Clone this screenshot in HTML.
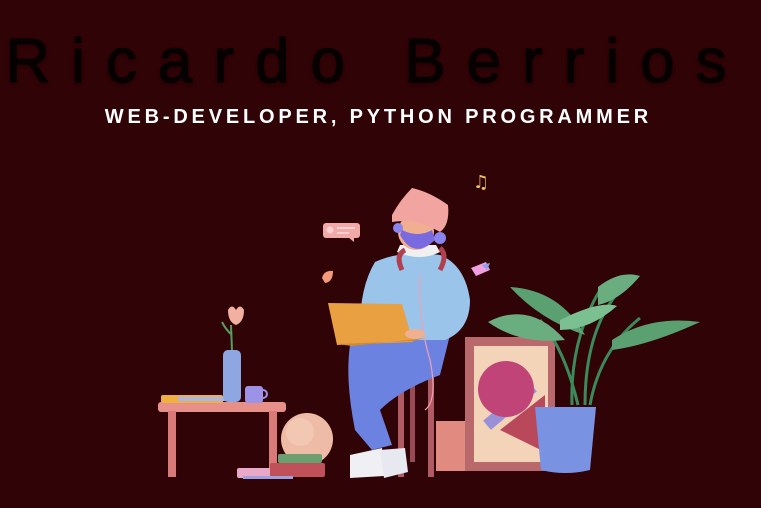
<!DOCTYPE html>
<html><head><meta charset="utf-8"><style>
html,body{margin:0;padding:0;}
body{width:761px;height:508px;background:#300306;overflow:hidden;position:relative;font-family:"Liberation Sans",sans-serif;}
h1{position:absolute;left:-4px;top:26px;width:761px;margin:0;text-align:center;font-size:62px;font-weight:400;letter-spacing:21px;color:#060000;text-indent:0;white-space:nowrap;-webkit-text-stroke:1.2px #060000;text-shadow:0 2px 3px rgba(0,0,0,.4);}
h2{position:absolute;left:-4px;top:106px;width:761px;margin:0;text-align:center;font-size:20px;font-weight:700;letter-spacing:3.8px;text-indent:3.8px;color:#fff;white-space:nowrap;}
svg{position:absolute;left:0;top:0;}
</style></head><body>
<h1>Ricardo Berrios</h1>
<h2>WEB-DEVELOPER, PYTHON PROGRAMMER</h2>
<svg width="761" height="508" viewBox="0 0 761 508">
<rect x="158" y="402" width="128" height="10" rx="3" fill="#e7908a"/>
<rect x="168" y="411" width="8" height="66" fill="#d97a78"/>
<rect x="269" y="411" width="8" height="66" fill="#d97a78"/>
<rect x="161" y="395" width="62" height="8" rx="2" fill="#f0b040"/>
<rect x="178" y="397" width="50" height="4" fill="#a9b6e8"/>
<path d="M232 351 L231 325 M232 335 Q226 330 222 322" stroke="#5a9a60" stroke-width="2" fill="none"/>
<path d="M228 310 Q232 303 236 310 Q240 303 244 310 Q244 322 236 325 Q228 322 228 310Z" fill="#f2b0a0"/>
<rect x="223" y="350" width="18" height="52" rx="5" fill="#8ea6e2"/>
<rect x="245" y="386" width="18" height="17" rx="3" fill="#9c92e8"/>
<path d="M263 390 a4 4 0 0 1 0 8" stroke="#9c92e8" stroke-width="2" fill="none"/>
<circle cx="307" cy="439" r="26" fill="#eebca6"/>
<circle cx="300" cy="432" r="14" fill="#f5d0bc" opacity=".6"/>
<rect x="237" y="468" width="55" height="10" rx="2" fill="#e8a8c8"/>
<rect x="270" y="463" width="55" height="14" rx="2" fill="#c0505a"/>
<rect x="278" y="454" width="44" height="9" rx="2" fill="#6aa070"/>
<rect x="243" y="476" width="50" height="3" fill="#a0a0e0"/>
<rect x="436" y="421" width="32" height="50" fill="#e08a80"/>
<rect x="465" y="337" width="90" height="134" fill="#b9686c"/>
<rect x="474" y="346" width="74" height="116" fill="#f3d4b8"/>
<rect x="480" y="400" width="60" height="12" fill="#9a90d8" transform="rotate(-40 510 406)"/>
<circle cx="506" cy="389" r="28" fill="#c04478"/>
<path d="M500 430 L545 395 L545 452Z" fill="#b8485a"/>
<path d="M572 405 Q570 340 600 290 M578 405 Q565 350 540 320 M590 405 Q600 350 640 318 M585 405 Q585 330 620 290" stroke="#3c8a5c" stroke-width="3" fill="none"/>
<path d="M488 322 Q530 300 565 340 Q520 345 488 322Z" fill="#6aae80"/>
<path d="M510 287 Q560 290 585 335 Q540 320 510 287Z" fill="#5aa070"/>
<path d="M560 320 Q600 300 617 306 Q590 330 560 330Z" fill="#7ac090"/>
<path d="M598 287 Q620 270 640 276 Q620 300 598 305Z" fill="#6aae80"/>
<path d="M612 340 Q650 315 700 322 Q650 345 612 350Z" fill="#5aa070"/>
<path d="M535 407 L596 407 L590 470 Q565 476 541 470Z" fill="#7a92e2"/>
<rect x="390" y="364" width="48" height="9" rx="2" fill="#c06870"/>
<rect x="398" y="372" width="6" height="105" fill="#b05a64"/>
<rect x="428" y="372" width="6" height="105" fill="#b05a64"/>
<rect x="410" y="372" width="5" height="90" fill="#9a4a54"/>
<path d="M350 345 Q345 380 355 430 L372 450 L392 445 L380 410 Q400 390 440 375 L450 335 L380 335Z" fill="#6c82e0"/>
<path d="M350 455 L382 448 L384 476 L350 478Z" fill="#f0f0f4"/>
<path d="M380 450 L405 448 L408 472 L384 478Z" fill="#e8e8f0"/>
<path d="M360 340 Q358 290 375 262 Q400 250 440 255 Q465 265 470 300 Q470 330 445 340Z" fill="#9ac4ea"/>
<path d="M397 252 Q420 262 440 252 L436 245 L400 245Z" fill="#f0f0f0"/>
<path d="M402 270 Q395 255 405 250 M440 270 Q448 255 440 248" stroke="#b04050" stroke-width="5" fill="none"/>
<path d="M420 275 Q418 320 430 360 Q438 400 425 410" stroke="#f0a0b8" stroke-width="1.2" fill="none"/>
<ellipse cx="416" cy="232" rx="18" ry="18" fill="#f0b090"/>
<path d="M400 235 Q414 260 435 240 L432 230 Q418 238 402 230Z" fill="#7a6ae0"/>
<path d="M392 215 Q400 200 412 188 Q430 192 448 205 Q450 225 440 232 Q415 218 392 222Z" fill="#f2a4a0"/>
<circle cx="398" cy="228" r="5" fill="#8a84ee"/><circle cx="440" cy="238" r="6" fill="#8a84ee"/>
<path d="M328 303 L402 304 L413 342 L337 345Z" fill="#e8a040"/>
<path d="M337 344 L413 341 L425 338 L352 346Z" fill="#d08a30"/>
<ellipse cx="415" cy="334" rx="10" ry="5" fill="#f0b090"/>
<rect x="323" y="223" width="37" height="15" rx="3" fill="#f2aaa8"/>
<path d="M348 237 l6 5 v-5z" fill="#f2aaa8"/>
<circle cx="330" cy="230" r="3.5" fill="#f8d0d0"/>
<rect x="337" y="227" width="18" height="2" fill="#f8d0d0"/><rect x="337" y="232" width="12" height="2" fill="#f8d0d0"/>
<path d="M322 278 Q324 270 333 271 Q333 282 325 283Z" fill="#f29a7a"/>
<path d="M471 268 L486 262 L490 270 L476 276Z" fill="#f0a0e0"/>
<path d="M482 265 L490 263 L487 270Z" fill="#8aa0e8"/>
<text x="473" y="188" font-size="18" fill="#f0c060" font-family="DejaVu Sans">♫</text>
</svg>
</body></html>
